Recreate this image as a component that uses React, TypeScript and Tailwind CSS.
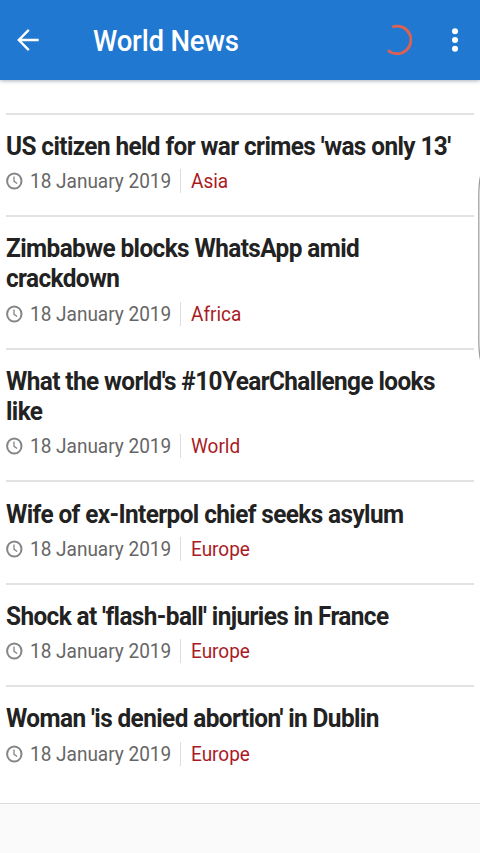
const items = [
  { lines: ["US citizen held for war crimes 'was only 13'"], tag: "Asia" },
  { lines: ["Zimbabwe blocks WhatsApp amid", "crackdown"], tag: "Africa" },
  { lines: ["What the world's #10YearChallenge looks", "like"], tag: "World" },
  { lines: ["Wife of ex-Interpol chief seeks asylum"], tag: "Europe" },
  { lines: ["Shock at 'flash-ball' injuries in France"], tag: "Europe" },
  { lines: ["Woman 'is denied abortion' in Dublin"], tag: "Europe" },
];

function Clock() {
  return (
    <svg className="h-[18px] w-[17px] shrink-0" viewBox="0 0 17 18" fill="none" stroke="#858585" strokeWidth="2">
      <ellipse cx="8.3" cy="9" rx="7.2" ry="7.6" />
      <path d="M8 4.5V9.3L11.2 11.5" strokeWidth="1.3" />
    </svg>
  );
}

export default function App() {
  return (
    <div className="relative flex h-[853px] w-[480px] flex-col overflow-hidden bg-[#fafafa] font-['Roboto',sans-serif]">
      <header className="z-10 flex h-20 shrink-0 items-center bg-[#2178d1] pl-4 text-white shadow-[0_1px_4px_rgba(40,60,90,0.4)]">
        <svg className="h-6 w-6" viewBox="0 0 24 24" fill="none" stroke="white" strokeWidth="2.4">
          <path d="M22.7 12H3M12.8 1.8L2.8 12L12.8 22.2" />
        </svg>
        <h1 className="ml-[53px] mt-[3px] w-[146px] origin-left scale-x-[0.95] whitespace-nowrap text-[29px] font-medium leading-none tracking-[-0.2px]">World News</h1>
        <svg className="ml-auto mr-[37px] h-8 w-8" viewBox="0 0 32 32" fill="none" stroke="#dd6152" strokeWidth="2.8">
          <path d="M12.5 3A13.8 13.8 0 1 1 8.3 26.2" transform="translate(-.3 0)" />
        </svg>
        <svg className="mr-[19px] h-6 w-[12px]" viewBox="0 0 12 24" fill="white">
          <circle cx="6" cy="3.3" r="3" /><circle cx="6" cy="12" r="3" /><circle cx="6" cy="20.8" r="3" />
        </svg>
      </header>
      <main className="h-[724px] shrink-0 border-b border-[#ddd] bg-white px-1.5 pt-[32.5px]">
        {items.map((it) => (
          <article key={it.lines[0]} className="border-t-2 border-[#e2e2e2] pb-[22px] pt-[16.2px]">
            <h2 className="origin-left scale-x-[0.937] text-[26px] font-bold leading-[30.4px] tracking-[-0.64px] text-[#222]">
              {it.lines.map((l) => <span key={l} className="block whitespace-nowrap">{l}</span>)}
            </h2>
            <div className="mt-[7.8px] flex h-[24px] items-center text-[20px] text-[#666]">
              <Clock />
              <span className="ml-[7.4px] w-[141.6px] origin-left scale-x-[0.95] whitespace-nowrap">18 January 2019</span>
              <span className="ml-[8px] h-6 w-px bg-[#ddd]" />
              <span className="ml-2.5 origin-left scale-x-[0.95] text-[#a91b1f]">{it.tag}</span>
            </div>
          </article>
        ))}
      </main>
      <svg className="absolute right-0 top-[174px] h-[188px] w-[3px]" viewBox="0 0 3 188" fill="white" stroke="#999" strokeWidth="1.2">
        <path d="M4.5 0Q2 4 1.8 22V166Q2 184 4.5 188" />
      </svg>
    </div>
  );
}
